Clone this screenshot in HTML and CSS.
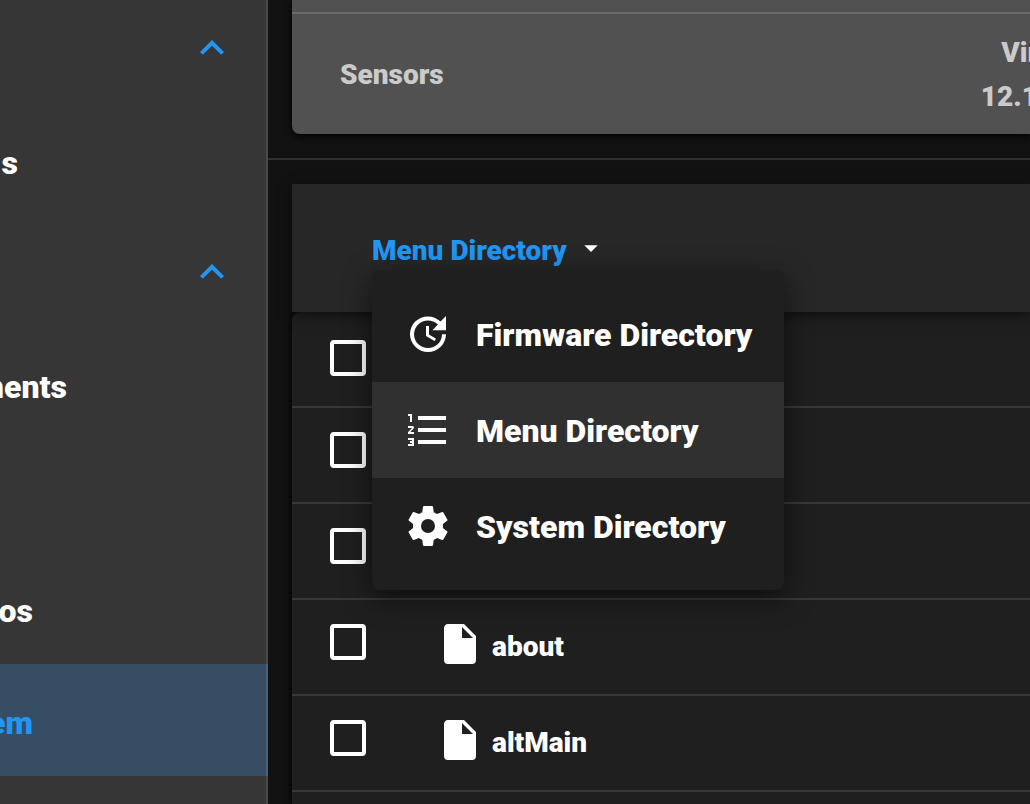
FILE: index.html
```html
<!DOCTYPE html>
<html lang="en">
<head>
<meta charset="utf-8">
<title>Menu Directory</title>
<link rel="stylesheet" href="styles.css">
</head>
<body>
<div class="app">
  <nav class="sidebar" aria-label="Main">
    <button class="nav-row nav-toggle" type="button" aria-label="Collapse group">
      <svg class="icon" viewBox="0 0 24 24"><path d="M7.41,15.41L12,10.83L16.59,15.41L18,14L12,8L6,14L7.41,15.41Z"/></svg>
    </button>
    <a class="nav-row" href="#"><span class="nav-label nav-label-xs">s</span></a>
    <button class="nav-row nav-toggle" type="button" aria-label="Collapse group">
      <svg class="icon" viewBox="0 0 24 24"><path d="M7.41,15.41L12,10.83L16.59,15.41L18,14L12,8L6,14L7.41,15.41Z"/></svg>
    </button>
    <a class="nav-row" href="#"><span class="nav-label nav-label-md">ments</span></a>
    <div class="nav-row"></div>
    <a class="nav-row" href="#"><span class="nav-label nav-label-sm">os</span></a>
    <a class="nav-row nav-active" href="#" aria-current="page"><span class="nav-label nav-label-sm">em</span></a>
  </nav>

  <main class="main">
    <section class="info">
      <div class="info-row info-row-end"></div>
      <div class="info-row">
        <span>Sensors</span>
        <span class="info-value">Vir<br>12.1</span>
      </div>
    </section>

    <section class="files">
      <header class="toolbar">
        <div class="picker">
          <button class="picker-button" type="button" aria-haspopup="menu" aria-expanded="true">
            <span>Menu Directory</span>
            <svg class="caret" viewBox="0 0 24 24"><path d="M7,10L12,15L17,10H7Z"/></svg>
          </button>
          <div class="menu" role="menu">
            <button class="menu-item" type="button" role="menuitem">
              <svg class="icon" viewBox="0 0 24 24"><path d="M21,10.12H14.22L16.96,7.3C14.23,4.6 9.81,4.5 7.08,7.2C4.35,9.91 4.35,14.28 7.08,17C9.81,19.7 14.23,19.7 16.96,17C18.32,15.65 19,14.08 19,12.1H21C21,14.08 20.12,16.65 18.36,18.39C14.85,21.87 9.15,21.87 5.64,18.39C2.14,14.92 2.11,9.28 5.62,5.81C9.13,2.34 14.76,2.34 18.27,5.81L21,3V10.12M12.5,8V12.25L16,14.33L15.28,15.54L11,13V8H12.5Z"/></svg>
              <span>Firmware Directory</span>
            </button>
            <button class="menu-item menu-item-current" type="button" role="menuitem">
              <svg class="icon" viewBox="0 0 24 24"><path d="M7,13V11H21V13H7M7,19V17H21V19H7M7,7V5H21V7H7M3,8V5H2V4H4V8H3M2,17V16H5V20H2V19H4V18.5H3V17.5H4V17H2M4.25,10A0.75,0.75 0 0,1 5,10.75C5,10.95 4.92,11.14 4.79,11.27L3.12,13H5V14H2V13.08L4,11H2V10H4.25Z"/></svg>
              <span>Menu Directory</span>
            </button>
            <button class="menu-item" type="button" role="menuitem">
              <svg class="icon" viewBox="0 0 24 24"><path d="M12,15.5A3.5,3.5 0 0,1 8.5,12A3.5,3.5 0 0,1 12,8.5A3.5,3.5 0 0,1 15.5,12A3.5,3.5 0 0,1 12,15.5M19.43,12.97C19.47,12.65 19.5,12.33 19.5,12C19.5,11.67 19.47,11.34 19.43,11L21.54,9.37C21.73,9.22 21.78,8.95 21.66,8.73L19.66,5.27C19.54,5.05 19.27,4.96 19.05,5.05L16.56,6.05C16.04,5.66 15.5,5.32 14.87,5.07L14.5,2.42C14.46,2.18 14.25,2 14,2H10C9.75,2 9.54,2.18 9.5,2.42L9.13,5.07C8.5,5.32 7.96,5.66 7.44,6.05L4.95,5.05C4.73,4.96 4.46,5.05 4.34,5.27L2.34,8.73C2.21,8.95 2.27,9.22 2.46,9.37L4.57,11C4.53,11.34 4.5,11.67 4.5,12C4.5,12.33 4.53,12.65 4.57,12.97L2.46,14.63C2.27,14.78 2.21,15.05 2.34,15.27L4.34,18.73C4.46,18.95 4.73,19.03 4.95,18.95L7.44,17.94C7.96,18.34 8.5,18.68 9.13,18.93L9.5,21.58C9.54,21.82 9.75,22 10,22H14C14.25,22 14.46,21.82 14.5,21.58L14.87,18.93C15.5,18.67 16.04,18.34 16.56,17.94L19.05,18.95C19.27,19.03 19.54,18.95 19.66,18.73L21.66,15.27C21.78,15.05 21.73,14.78 21.54,14.63L19.43,12.97Z"/></svg>
              <span>System Directory</span>
            </button>
          </div>
        </div>
      </header>

      <ul class="list">
        <li class="row row-head"><input class="check" type="checkbox" aria-label="Select all"></li>
        <li class="row"><input class="check" type="checkbox" aria-label="Select item"></li>
        <li class="row"><input class="check" type="checkbox" aria-label="Select item"></li>
        <li class="row">
          <input class="check" type="checkbox" id="about">
          <label class="file" for="about">
            <svg class="icon" viewBox="0 0 24 24"><path d="M13,9V3.5L18.5,9M6,2C4.89,2 4,2.89 4,4V20A2,2 0 0,0 6,22H18A2,2 0 0,0 20,20V8L14,2H6Z"/></svg>
            <span>about</span>
          </label>
        </li>
        <li class="row">
          <input class="check" type="checkbox" id="altMain">
          <label class="file" for="altMain">
            <svg class="icon" viewBox="0 0 24 24"><path d="M13,9V3.5L18.5,9M6,2C4.89,2 4,2.89 4,4V20A2,2 0 0,0 6,22H18A2,2 0 0,0 20,20V8L14,2H6Z"/></svg>
            <span>altMain</span>
          </label>
        </li>
      </ul>
    </section>
  </main>
</div>
</body>
</html>
```
FILE: styles.css
```css
* {
  box-sizing: border-box;
}

body {
  margin: 0;
  overflow: hidden;
  background: #121212;
  color: #fff;
  font: 900 28px/44px Roboto, sans-serif;
}

button {
  border: 0;
  background: none;
  color: inherit;
  font: inherit;
}

.app {
  display: flex;
  height: 100vh;
  overflow: hidden;
}

.icon {
  flex: none;
  width: 48px;
  height: 48px;
  fill: currentColor;
}

/* Sidebar */
.sidebar {
  flex: none;
  display: flex;
  flex-direction: column;
  width: 268px;
  background: #363636;
  box-shadow: inset -2px 0 #4a4a4a;
  overflow: hidden;
}

.nav-row {
  flex: none;
  display: flex;
  align-items: center;
  height: 112px;
  padding: 0;
  color: #fff;
  font-size: 32px;
  text-decoration: none;
}

.nav-row:first-child {
  margin-top: -8px;
}

.nav-toggle {
  justify-content: flex-end;
  padding-right: 32px;
  color: #2196f3;
}

.nav-active {
  background: #364d63;
  box-shadow: inset -2px 0 #496075;
  color: #2196f3;
}

.nav-label {
  display: flex;
  justify-content: flex-end;
  padding-top: 6px;
  overflow: hidden;
}

.nav-label-xs {
  width: 18px;
}

.nav-label-sm {
  width: 33px;
}

.nav-label-md {
  width: 67px;
}

/* Content */
.main {
  flex: 1;
  min-width: 0;
}

.info {
  margin-left: 24px;
  border-radius: 0 0 0 8px;
  background: #515151;
  box-shadow: 0 2px 8px #000;
  color: #cbcbcb;
}

.info-row {
  display: flex;
  align-items: center;
  justify-content: space-between;
  height: 120px;
  padding: 2px 0 0 48px;
}

.info-row-end {
  height: 14px;
  border-bottom: 2px solid #6b6b6b;
}

.info-value {
  margin-right: -8px;
  text-align: right;
}

.files {
  margin-top: 24px;
  padding: 24px 0 0 24px;
  border-top: 2px solid #303030;
}

.toolbar {
  position: relative;
  z-index: 1;
  display: flex;
  align-items: center;
  height: 128px;
  padding-left: 80px;
  background: #272727;
  box-shadow: 0 4px 12px rgba(0, 0, 0, 0.5);
}

.picker {
  position: relative;
}

.picker-button {
  display: flex;
  align-items: center;
  gap: 8px;
  padding: 0;
  color: #2196f3;
}

.picker-button span {
  padding-top: 6px;
}

.caret {
  width: 32px;
  height: 32px;
  fill: #fff;
}

/* Drop-down menu */
.menu {
  position: absolute;
  top: 47px;
  left: 0;
  width: 412px;
  padding: 16px 0;
  border-radius: 8px;
  background: #1f1f1f;
  box-shadow: 0 8px 28px rgba(0, 0, 0, 0.55);
}

.menu-item {
  display: flex;
  align-items: center;
  gap: 24px;
  width: 100%;
  height: 96px;
  padding: 0 32px;
  font-size: 32px;
  white-space: nowrap;
}

.menu-item span {
  padding-top: 2px;
}

.menu-item-current {
  background: #303030;
}

/* File list */
.list {
  min-height: 492px;
  margin: 0;
  padding: 0;
  border-radius: 8px 0 0 0;
  background: #1f1f1f;
  box-shadow: 0 2px 10px #000;
  list-style: none;
}

.row {
  display: flex;
  align-items: flex-start;
  gap: 70px;
  height: 96px;
  padding: 24px 0 0 38px;
  border-bottom: 2px solid #393939;
}

.row-head {
  padding-top: 28px;
}

.check {
  appearance: none;
  width: 36px;
  height: 36px;
  margin: 0;
  border: 4px solid #fff;
  border-radius: 4px;
}

.file {
  display: flex;
  align-items: center;
  gap: 8px;
  height: 48px;
  margin-top: -4px;
}

.file span {
  padding-top: 6px;
}
```
